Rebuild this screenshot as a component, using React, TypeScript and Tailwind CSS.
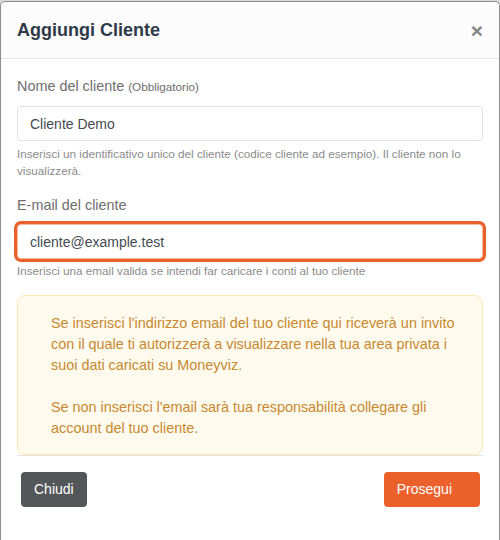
import { useState } from 'react'

export default function App() {
  const [name, setName] = useState('Cliente Demo')
  const [email, setEmail] = useState('cliente@example.test')

  return (
    <div
      className="h-[540px] w-[500px] overflow-hidden bg-[#d9d9d9] pt-[1px]"
      style={{ fontFamily: '"Liberation Sans", Arial, sans-serif' }}
    >
      <div className="h-[545px] rounded-t-[5px] border border-b-0 border-[#8e8e8e] bg-white">
        {/* header */}
        <div className="flex h-[57px] items-center justify-between rounded-t-[5px] border-b border-[#e6e6e3] bg-[#fcfcfc] pl-4 pr-[16px]">
          <h2 className="text-[18px] font-bold text-[#2f3a48]">Aggiungi Cliente</h2>
          <button className="text-[21px] leading-none font-bold text-[#858585]" aria-label="Chiudi">
            ×
          </button>
        </div>

        {/* body */}
        <div className="px-4 pt-[17px]">
          <label className="block text-[14.4px] leading-5 text-[#6e6e6e]">
            Nome del cliente <span className="text-[11.7px]">(Obbligatorio)</span>
          </label>
          <input
            value={name}
            onChange={e => setName(e.target.value)}
            className="mt-[9px] block h-[35px] w-full rounded-[4px] border border-[#e3e3e3] bg-white px-[12px] text-[14px] text-[#444a50] outline-none"
          />
          <p className="mt-[4px] text-[11.7px] leading-[17px] text-[#8b8b8b]">
            Inserisci un identificativo unico del cliente (codice cliente ad esempio). Il cliente non lo
            visualizzerà.
          </p>

          <label className="mt-4 block text-[14.4px] leading-5 text-[#6e6e6e]">E-mail del cliente</label>
          <input
            value={email}
            onChange={e => setEmail(e.target.value)}
            className="mt-[9px] block h-[35px] w-full rounded-[4px] border border-[#f7b89f] bg-white px-[12px] text-[14px] text-[#444a50] outline-none ring-[3px] ring-[#e9602c]"
          />
          <p className="mt-[3px] text-[11.7px] leading-[17px] text-[#8b8b8b]">
            Inserisci una email valida se intendi far caricare i conti al tuo cliente
          </p>

          <div className="mt-4 h-[160px] rounded-[8px] border border-[#fde6b6] bg-[#fffaee] pt-[17px] pr-4 pl-[33px] text-[14.4px] leading-[21px] text-[#c6892f]">
            <p>
              Se inserisci l'indirizzo email del tuo cliente qui riceverà un invito con il quale ti
              autorizzerà a visualizzare nella tua area privata i suoi dati caricati su Moneyviz.
            </p>
            <p className="mt-[21px]">
              Se non inserisci l'email sarà tua responsabilità collegare gli account del tuo cliente.
            </p>
          </div>
          <div className="border-t border-[#e6e6e3]" />
        </div>

        {/* footer */}
        <div className="flex justify-between pt-4 pr-[19px] pl-5">
          <button className="h-[35px] rounded-[4px] bg-[#53575a] px-[13px] text-[14px] text-white">
            Chiudi
          </button>
          <button className="h-[35px] rounded-[4px] bg-[#ec612b] pr-[28px] pl-[13px] text-[14px] text-white">
            Prosegui
          </button>
        </div>
      </div>
    </div>
  )
}
